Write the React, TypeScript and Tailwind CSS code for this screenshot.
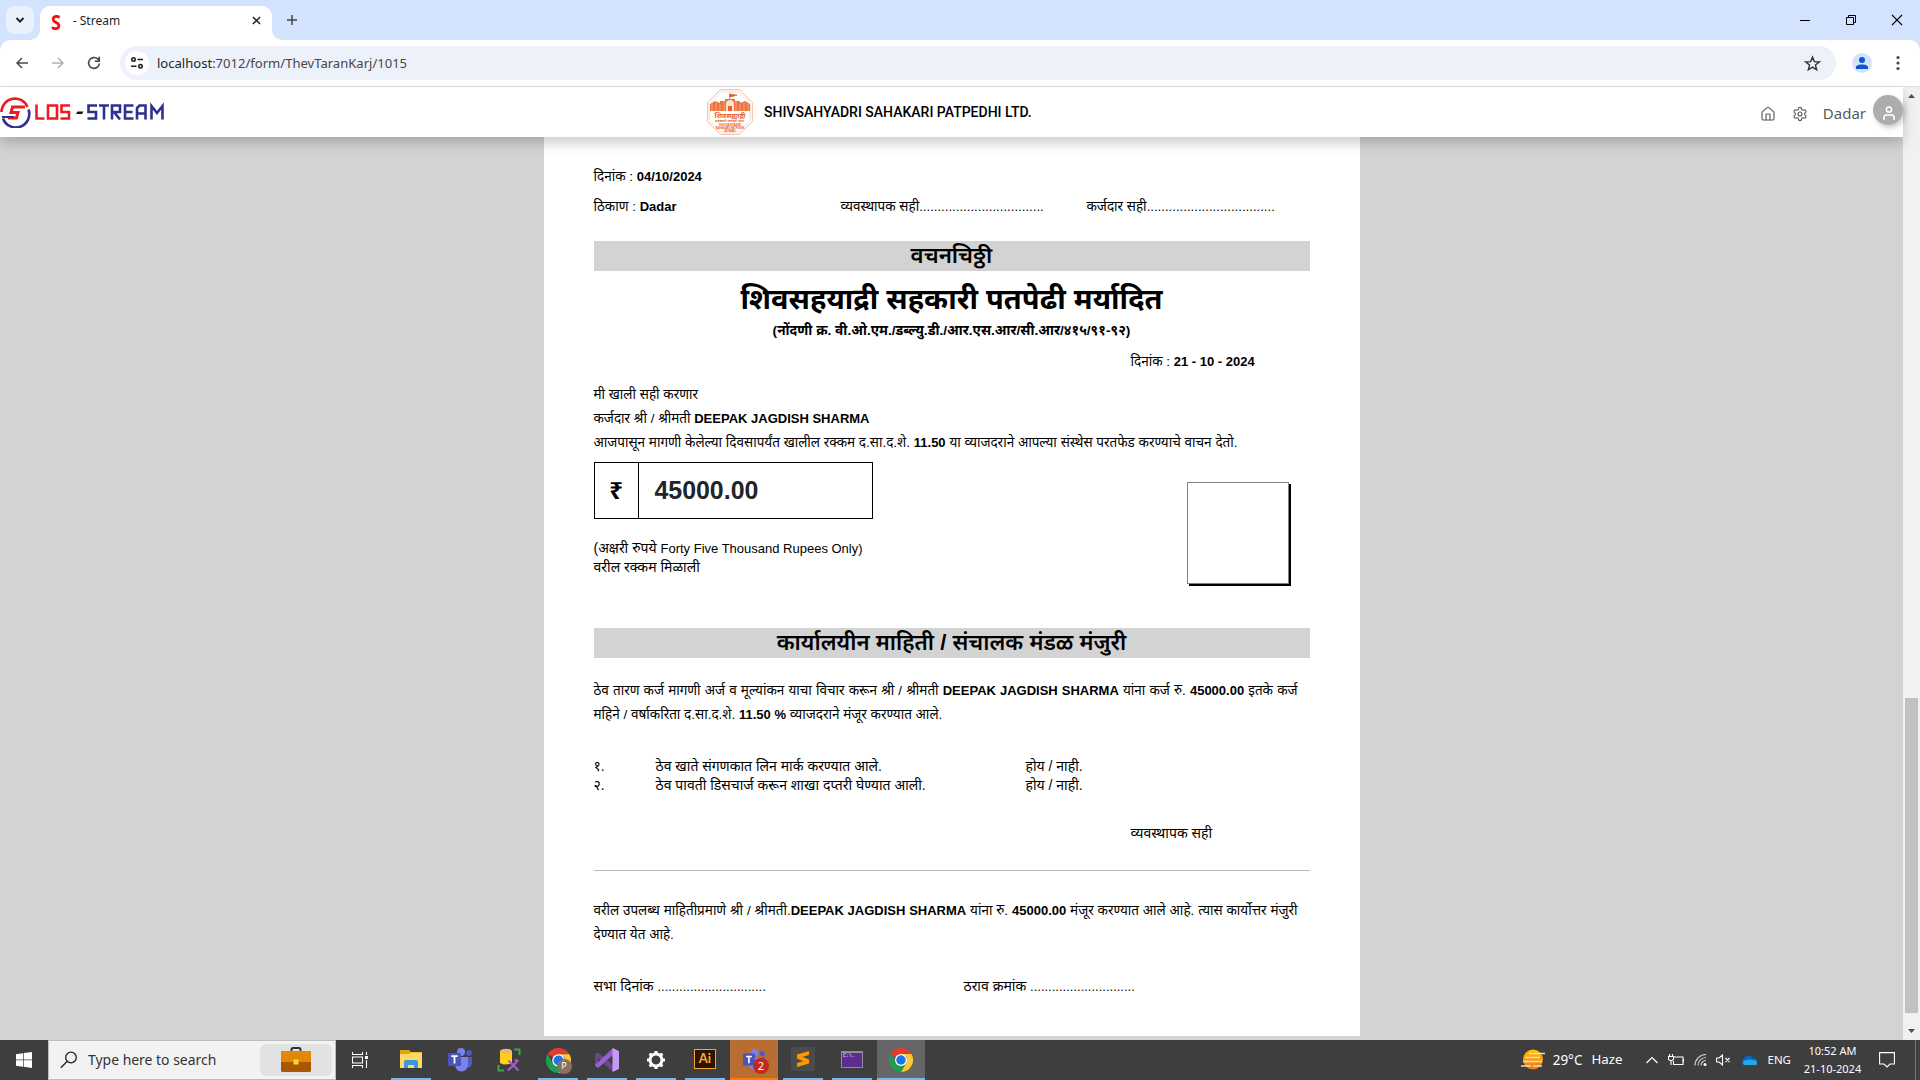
import React from "react";
import { LuHouse, LuSettings } from "react-icons/lu";

const NAME = "DEEPAK JAGDISH SHARMA";

const Row = ({ className = "", children }: { className?: string; children?: React.ReactNode }) => (
  <div className={"flex items-center whitespace-nowrap " + className}>{children}</div>
);

const B = ({ children }: { children: React.ReactNode }) => <b className="text-[13px]">{children}</b>;

function ChromeIcon({ className = "size-[25px]" }: { className?: string }) {
  return (
    <svg viewBox="0 0 48 48" className={className}>
      <path d="M24 24 3.2 12A24 24 0 0 1 44.8 12H24z" fill="#e33b2e" />
      <path d="M44.8 12A24 24 0 0 1 24 48L34.4 30 36 18 24 12z" fill="#fcc934" />
      <path d="M3.2 12A24 24 0 0 0 24 48L34.4 30 24 32 13.6 30z" fill="#1e9e50" />
      <circle cx="24" cy="24" r="12" fill="#fff" />
      <circle cx="24" cy="24" r="9.5" fill="#1a73e8" />
    </svg>
  );
}

function TeamsIcon({ className = "size-[26px]" }: { className?: string }) {
  return (
    <svg viewBox="0 0 26 26" className={className}>
      <circle cx="22" cy="6" r="2.8" fill="#5059c9" />
      <path d="M17 10h8v7a4 4 0 0 1-6 3z" fill="#5059c9" />
      <circle cx="14" cy="5" r="4" fill="#7b83eb" />
      <path d="M8 10h13v8a6.5 6.5 0 0 1-13 0z" fill="#7b83eb" />
      <rect x="1" y="6" width="13" height="13" rx="1" fill="#4b53bc" />
      <path d="M4.3 9.2h6.4M7.5 9.2v7.3" stroke="#fff" strokeWidth="1.8" />
    </svg>
  );
}

function TaskButton({ children, className = "", bar = "bg-[#76b9ed]", wide = false }: { children: React.ReactNode; className?: string; bar?: string; wide?: boolean }) {
  return (
    <div className={"flex h-10 w-12 flex-col items-center " + className}>
      <div className="flex h-[38px] w-12 items-center justify-center pt-[2px]">{children}</div>
      <div className={(wide ? "w-12 " : "w-10 ") + "h-[2px] " + bar} />
    </div>
  );
}

function TabStrip() {
  return (
    <div className="flex h-10 items-start bg-[#d3e3fd]">
      <div className="ml-[6px] mt-[6px] flex size-7 items-center justify-center rounded-[9px] bg-[#e9f1fe]">
        <svg viewBox="0 0 10 10" className="size-[10px]"><path d="M1.5 3 5 6.6 8.5 3" fill="none" stroke="#1f1f1f" strokeWidth="1.9" /></svg>
      </div>
      <svg viewBox="0 0 10 10" className="mt-[30px] ml-[-4px] size-[10px]"><path d="M10 0v10H0A10 10 0 0 0 10 0" fill="#fff" /></svg>
      <div className="mt-[6px] flex h-[34px] w-[232px] items-center rounded-t-[10px] bg-white pb-[5px]">
        <div className="ml-[9px] flex w-[14px] scale-x-[0.82] justify-center font-['Noto_Sans'] text-[22px] leading-none font-bold text-[#fa0a0a]">S</div>
        <span className="ml-[10px] w-[182px] font-['Noto_Sans'] text-[12px] text-[#1f1f1f]">- Stream</span>
        <svg viewBox="0 0 10 10" className="mr-[11px] size-[9px] shrink-0"><path d="M1 1l8 8M9 1 1 9" stroke="#1f1f1f" strokeWidth="1.6" /></svg>
      </div>
      <svg viewBox="0 0 10 10" className="mt-[30px] size-[10px]"><path d="M0 0v10h10A10 10 0 0 1 0 0" fill="#fff" /></svg>
      <svg viewBox="0 0 12 12" className="mt-[14px] ml-[4px] size-3"><path d="M6 1v10M1 6h10" stroke="#474747" strokeWidth="1.5" /></svg>
      <div className="ml-auto flex items-center pt-[14px]">
        <svg viewBox="0 0 10 12" className="h-3 w-[10px]"><path d="M0 6.5h10" stroke="#000" /></svg>
        <svg viewBox="0 0 12 12" className="ml-[35px] size-3"><path d="M1.5 3.5h7v7h-7zM3.5 3.5v-2h7v7h-2" fill="none" stroke="#000" /></svg>
        <svg viewBox="0 0 12 12" className="mr-[17px] ml-[34px] size-3"><path d="M1 1l10 10M11 1 1 11" stroke="#000" strokeWidth="1.1" /></svg>
      </div>
    </div>
  );
}

function AddressBar() {
  return (
    <div className="bg-[#d3e3fd]">
      <div className="flex h-[47px] items-center rounded-t-[10px] border-b border-[#dfe0e2] bg-white">
        <svg viewBox="0 0 12 12" className="ml-4 size-3"><path d="M12 6H1M6 1 1 6l5 5" fill="none" stroke="#474747" strokeWidth="1.5" /></svg>
        <svg viewBox="0 0 12 12" className="ml-6 size-3"><path d="M0 6h11M6 1l5 5-5 5" fill="none" stroke="#b0b0b0" strokeWidth="1.5" /></svg>
        <svg viewBox="0 0 14 14" className="ml-[23px] size-[14px]"><path d="M12.4 7.5a5.4 5.4 0 1 1-1.8-4.6L12 4.3M12.2.8v4.4H7.8" fill="none" stroke="#474747" strokeWidth="1.6" /></svg>
        <div className="ml-[19px] flex h-[34px] w-[1716px] items-center rounded-full bg-[#edf1fa]">
          <div className="ml-[5px] flex size-6 items-center justify-center rounded-full bg-white">
            <svg viewBox="0 0 14 14" className="size-[14px]"><g fill="none" stroke="#1f1f1f" strokeWidth="1.6"><circle cx="3.5" cy="3.5" r="1.7" /><path d="M7.5 3.5H13M1 10.2h5.5" /><circle cx="10.5" cy="10.2" r="1.7" /></g></svg>
          </div>
          <span className="mt-px ml-[8px] font-['Noto_Sans'] text-[13.05px] text-[#474747]"><span className="text-[#1f1f1f]">localhost</span>:7012/form/ThevTaranKarj/1015</span>
          <svg viewBox="0 0 24 24" className="mr-[15px] ml-auto size-[17px]"><path d="m12 3 2.6 6.3 6.9.5-5.3 4.4 1.7 6.6-5.9-3.6-5.9 3.6 1.7-6.6-5.3-4.4 6.9-.5z" fill="none" stroke="#333" strokeWidth="2" /></svg>
        </div>
        <div className="ml-4 flex size-5 items-center justify-center rounded-full bg-[#d3e3fd]">
          <svg viewBox="0 0 12 12" className="size-3"><circle cx="6" cy="3" r="3" fill="#0b57d0" /><path d="M0 12V10C0 6.500 12 6.500 12 10v2z" fill="#0b57d0" /></svg>
        </div>
        <svg viewBox="0 0 4 16" className="ml-6 h-4 w-1"><g fill="#474747"><circle cx="2" cy="2.500" r="1.6" /><circle cx="2" cy="8" r="1.6" /><circle cx="2" cy="13.500" r="1.6" /></g></svg>
      </div>
    </div>
  );
}

function LosLogo() {
  return (
    <svg viewBox="0 0 166 32" className="h-8 w-[166px]">
      <g fill="none" strokeWidth="2.600">
        <path d="M1.5 16A13.500 13.500 0 0 1 27.500 11" stroke="#ed1c24" />
        <path d="M28.500 13.500A13.500 13.500 0 0 1 3 22.500" stroke="#2e3192" />
        <path d="M25 11H12.500l-1.500 5.500h7L16.500 22H8" stroke="#ed1c24" strokeWidth="3" />
        <path d="M2 21h12" stroke="#2e3192" strokeWidth="2" />
      </g>
      <g fill="none" stroke="#ed1c24" strokeWidth="2.600">
        <path d="M36.500 8.500v14h8M48 9.500h9v13h-9zM70 9.500h-8.500V16H69v6.500h-8.500" />
      </g>
      <path d="M77.500 15.500h6l-1.500 2.500h-6z" fill="#111" />
      <g fill="none" stroke="#2e3192" strokeWidth="2.600">
        <path d="M97 9.500h-8.500V16H96v6.500h-8.500M99 9.500h10M104 9.500v14M112 23.500v-14h8V16h-6l6 7.500M133.500 9.500H125v13h8.500M125 16h7.500M137 23.500V12l2.500-2.500h6v14M137 17.500h8.500M151.500 23.500V10l5.500 7 5.500-7v13.500" />
      </g>
    </svg>
  );
}

function Emblem() {
  return (
    <svg viewBox="0 0 46 46" className="size-[46px]">
      <path d="M13.500.7h19L45.300 13.500v19L32.500 45.300h-19L.7 32.500v-19z" fill="#fff" stroke="#f3b99d" />
      <path d="M14.500 2.900h17L43.100 14.500v17L31.500 43.100h-17L2.900 31.500v-17z" fill="none" stroke="#f6cdb9" strokeWidth=".7" />
      <path d="M22.500 4.500V11M23 5l7 1.200L23 8z" fill="#e8622c" stroke="#e8622c" strokeWidth=".8" />
      <path d="M3 22v-7l5-3 5 2v-2h5v-2h10v2h5v2l5-2 5 3v7z" fill="#ec7442" />
      <path d="M19 22v-7a4 4 0 0 1 8 0v7z" fill="#fbe1d4" /><path d="M21 22v-5h4v5z" fill="#e8622c" />
      <path d="M5 14v8M9 13v9M13 15v7M17 12v10M29 12v10M33 15v7M37 13v9M41 14v8" stroke="#f7b795" strokeWidth=".8" />
      <g fontFamily="Noto Sans" fill="#e8622c" textAnchor="middle" fontWeight="700">
        <text x="23" y="28.500" fontSize="7">शिवसह्याद्री</text>
        <text x="23" y="33" fontSize="3.600">सहकारी पतपेढी मर्या.</text>
        <text x="23" y="36.800" fontSize="3">SHIVSAHYADRI</text>
        <text x="23" y="39.800" fontSize="2.800">SAHAKARI PATPEDHI</text>
        <text x="23" y="42.600" fontSize="2.600">MUMBAI</text>
      </g>
    </svg>
  );
}

function AppHeader() {
  return (
    <header className="relative z-10 flex h-[50px] w-[1903px] items-center bg-white shadow-[0_6px_12px_rgba(0,0,0,0.2)]">
      <div className="flex w-[707px] items-center"><LosLogo /></div>
      <Emblem />
      <span className="ml-[11px] font-['Roboto'] text-[14px] font-medium text-black">SHIVSAHYADRI SAHAKARI PATPEDHI LTD.</span>
      <div className="ml-auto flex items-center text-[#5b5b5b]">
        <LuHouse className="mt-[4px] size-4" strokeWidth={1.7} />
        <LuSettings className="mt-[4px] ml-4 size-4" strokeWidth={1.7} />
        <span className="mt-[2px] ml-[15px] font-['Noto_Sans'] text-[15px]">Dadar</span>
        <div className="mb-[5px] ml-[7px] flex size-[30px] items-center justify-center rounded-full bg-[#adadad] shadow-[2px_3px_5px_rgba(0,0,0,0.2)]">
          <svg viewBox="0 0 12 14" className="mt-[6px] ml-[2px] h-[14px] w-3"><g fill="none" stroke="#fff" strokeWidth="1.500"><circle cx="6" cy="3.500" r="2.600" /><path d="M1 14v-2.500Q1 9 3.500 9h5Q11 9 11 11.500V14" /></g></svg>
        </div>
      </div>
    </header>
  );
}

function Document() {
  return (
    <div className="mx-auto h-[899px] w-[816px] bg-white px-[50px] pt-[27px] font-['Liberation_Sans','Noto_Sans',sans-serif] text-[13.500px] text-black">
      <Row className="mt-px h-[24px]"><span>दिनांक : <B>04/10/2024</B></span></Row>
      <Row className="mt-[6px] h-[24px]">
        <span className="w-[247px]">ठिकाण : <B>Dadar</B></span>
        <span className="w-[246px]">व्यवस्थापक सही<span className="text-[13.200px]">..................................</span></span>
        <span>कर्जदार सही<span className="text-[13.200px]">...................................</span></span>
      </Row>
      <Row className="mt-[22px] h-[30px] justify-center bg-[#d3d3d3] text-[22.300px] font-semibold">वचनचिठ्ठी</Row>
      <Row className="mt-[9px] h-[40px] justify-center text-[29px] font-bold">शिवसहयाद्री सहकारी पतपेढी मर्यादित</Row>
      <Row className="mt-[-1px] h-[24px] justify-center text-[13.700px] font-bold">(नोंदणी क्र. वी.ओ.एम./डब्ल्यु.डी./आर.एस.आर/सी.आर/४१५/९१-९२)</Row>
      <Row className="mt-[7px] h-[24px] pl-[537px]"><span>दिनांक : <B>21 - 10 - 2024</B></span></Row>
      <Row className="mt-[9px] h-[24px]">मी खाली सही करणार</Row>
      <Row className="h-[24px]"><span>कर्जदार श्री / श्रीमती <B>{NAME}</B></span></Row>
      <Row className="h-[25px]"><span className="w-[644px] [text-align-last:justify]">आजपासून मागणी केलेल्या दिवसापर्यंत खालील रक्कम द.सा.द.शे. <B>11.50</B> या व्याजदराने आपल्या संस्थेस परतफेड करण्याचे वाचन देतो.</span></Row>
      <div className="mt-[6px] flex h-[166px] items-start">
        <div>
          <div className="flex h-[57px] w-[279px] border border-black font-bold">
            <div className="flex w-[44px] items-center justify-center border-r border-black text-[24px]">₹</div>
            <div className="flex items-center pl-4 text-[24.900px] text-[#212529]">45000.00</div>
          </div>
          <Row className="mt-[20px] h-[19px] text-[14px]"><span>(अक्षरी रुपये <span className="text-[13px]">Forty Five Thousand Rupees Only)</span></span></Row>
          <Row className="h-[19px] text-[14px]">वरील रक्कम मिळाली</Row>
        </div>
        <div className="mt-5 ml-[314px] h-[102px] w-[102px] border border-[#808080] bg-white shadow-[2px_2px_0_#000]" />
      </div>
      <Row className="h-[30px] justify-center bg-[#d3d3d3] text-[22.200px] font-semibold">कार्यालयीन माहिती / संचालक मंडळ मंजुरी</Row>
      <Row className="mt-[21px] h-[24px]"><span className="w-[704px] [text-align-last:justify]">ठेव तारण कर्ज मागणी अर्ज व मूल्यांकन याचा विचार करून श्री / श्रीमती <B>{NAME}</B> यांना कर्ज रु. <B>45000.00</B> इतके कर्ज</span></Row>
      <Row className="h-[24px]"><span>महिने / वर्षाकरिता द.सा.द.शे. <B>11.50 %</B> व्याजदराने मंजूर करण्यात आले.</span></Row>
      <Row className="mt-[30px] h-[19px] text-[14px]"><span className="w-[62px]">१.</span><span className="w-[370px]">ठेव खाते संगणकात लिन मार्क करण्यात आले.</span><span>होय / नाही.</span></Row>
      <Row className="h-[19px] text-[14px]"><span className="w-[62px]">२.</span><span className="w-[370px]">ठेव पावती डिसचार्ज करून शाखा दप्तरी घेण्यात आली.</span><span>होय / नाही.</span></Row>
      <Row className="mt-[28px] h-[20px] pl-[537px] text-[14px]">व्यवस्थापक सही</Row>
      <div className="mt-[27px] h-px bg-[#bdbdbd]" />
      <Row className="mt-[28px] h-[24px]"><span className="w-[704px] [text-align-last:justify]">वरील उपलब्ध माहितीप्रमाणे श्री / श्रीमती.<B>{NAME}</B> यांना रु. <B>45000.00</B> मंजूर करण्यात आले आहे. त्यास कार्योत्तर मंजुरी</span></Row>
      <Row className="h-[24px]">देण्यात येत आहे.</Row>
      <Row className="mt-[27px] h-[24px] text-[14px]"><span className="w-[370px]">सभा दिनांक <span className="text-[13px]">..............................</span></span><span>ठराव क्रमांक <span className="text-[13px]">.............................</span></span></Row>
    </div>
  );
}

function Taskbar() {
  return (
    <div className="flex h-10 items-center bg-[#3e3e3e] font-['Noto_Sans'] text-white">
      <div className="flex w-12 justify-center">
        <svg viewBox="0 0 16 16" className="size-4"><path d="M0 2.300 7 1.200v6.300H0zM7.700 1.100 16 0v7.500H7.700zM0 8.200h7v6.500L0 13.700zM7.700 8.200H16V16l-8.300-1.200z" fill="#fff" /></svg>
      </div>
      <div className="flex h-10 w-[288px] items-center border border-[#bcbcbc] bg-[#f2f2f2] text-[#333]">
        <svg viewBox="0 0 18 18" className="ml-[11px] size-[18px]"><circle cx="11" cy="6.500" r="5.300" fill="none" stroke="#222" strokeWidth="1.300" /><path d="M7 10.500.8 16.800" stroke="#222" strokeWidth="1.300" /></svg>
        <span className="ml-[10px] text-[13.950px]">Type here to search</span>
        <div className="mr-[3px] ml-auto flex h-8 w-[72px] items-center justify-center rounded-md bg-[#e2e2e2]">
          <svg viewBox="0 0 30 26" className="h-[26px] w-[30px]"><path d="M10.500 4.500V2.500Q10.500 1 12 1h6q1.500 0 1.500 1.500v2" fill="none" stroke="#333" strokeWidth="2" /><rect y="4" width="30" height="21" rx="1.500" fill="#a85802" /><path d="M0 5.500Q0 4 1.500 4h27Q30 4 30 5.500V15H0z" fill="#e18807" /><rect x="12.500" y="12.500" width="5" height="5" fill="#fdd835" /></svg>
        </div>
      </div>
      <div className="flex w-12 justify-center">
        <svg viewBox="0 0 16 16" className="size-4"><g fill="none" stroke="#fff" strokeWidth="1.100"><path d="M.5 0v2.500h10V0M.5 5h10v6H.5zM.5 16v-2.500h10V16M14.500 0v3M14.500 8v8" /></g><path d="M13 4h3v3h-3z" fill="#fff" /></svg>
      </div>
      <div className="flex gap-x-[1px]">
        <TaskButton className="ml-[3px]">
          <svg viewBox="0 0 22 20" className="h-5 w-[22px]"><path d="M0 1q0-1 1-1h8l2 2h10q1 0 1 1v14H0z" fill="#e5a50a" /><path d="M0 4h9l2-1.500h11V18H0z" fill="#ffd966" /><path d="M4 18v-6q0-2 2-2h10q2 0 2 2v6h-4v-3H8v3z" fill="#3a96dd" /></svg>
        </TaskButton>
        <TaskButton bar="bg-transparent"><TeamsIcon /></TaskButton>
        <TaskButton bar="bg-transparent">
          <svg viewBox="0 0 24 24" className="size-6"><path d="M3 3v12q5 3 12 0V3z" fill="#ffcf1a" /><ellipse cx="9" cy="3.200" rx="6" ry="2.500" fill="#f6b26b" /><path d="M17 1.500h5.500V7M1.500 17v5.500H7" fill="none" stroke="#39a845" strokeWidth="2" /><path d="m11.500 12.500 10 10M21 12.500l-10 10M17.500 12l4 1" stroke="#a45ad0" strokeWidth="2.200" /></svg>
        </TaskButton>
        <TaskButton>
          <span className="relative"><ChromeIcon /><span className="absolute top-[11px] left-[11px] flex size-[15px] items-center justify-center rounded-full bg-[#8d6e63] text-[9px]">P</span></span>
        </TaskButton>
        <TaskButton>
          <svg viewBox="0 0 24 24" className="size-6"><path d="M0 6 3 4.500 18 17v7L3 10v9l-3-2z" fill="#68478f" /><path d="m0 18 3 2L18 7V0L0 17z" fill="#9561d1" /><path d="m17.500 0 6.500 3v18l-6.500 3z" fill="#c79bf5" /></svg>
        </TaskButton>
        <TaskButton>
          <svg viewBox="0 0 20 20" className="size-[20px]"><circle cx="10" cy="10" r="6" fill="none" stroke="#fff" strokeWidth="3" /><path d="M10 1v3M10 16v3M1 10h3M16 10h3M3.600 3.600l2.100 2.100M14.300 14.300l2.100 2.100M3.600 16.400l2.100-2.100M14.300 5.700l2.100-2.100" stroke="#fff" strokeWidth="3" /></svg>
        </TaskButton>
        <TaskButton><div className="mb-[3px] flex h-5 w-[22px] items-center justify-center border border-[#f7a139] bg-[#2a1600] font-['Lato'] text-[13px] font-bold text-[#ffa937]">Ai</div></TaskButton>
        <TaskButton className="bg-[#b86d33]" bar="bg-[#ff7a0a]" wide>
          <span className="relative"><TeamsIcon className="size-6" /><span className="absolute top-[10px] left-[11px] flex size-4 items-center justify-center rounded-full bg-[#c4291c] text-[11px]">2</span></span>
        </TaskButton>
        <TaskButton>
          <div className="mb-[2px] flex size-6 items-center justify-center rounded-[2px] bg-[#4b4b4b]"><svg viewBox="0 0 14 18" className="h-[18px] w-[14px]"><path d="M1 4.500 13 1v4L1 8.500zM1 4.500l12 5v4l-12-5zM1 13l12-3.500v4L1 17z" fill="#ff9800" /></svg></div>
        </TaskButton>
        <TaskButton><div className="mb-[2px] h-[17px] w-[22px] border border-t-2 border-[#8d8d9b] bg-[#5c2d91] pl-px font-['Liberation_Mono'] text-[5px] leading-[7px]">C:\.</div></TaskButton>
        <TaskButton className="bg-[#666]" wide><ChromeIcon className="size-6" /></TaskButton>
      </div>
      <div className="ml-auto flex h-10 items-center">
        <svg viewBox="0 0 24 22" className="h-[22px] w-6"><defs><linearGradient id="sun" x2="0" y2="1"><stop stopColor="#fdc400" /><stop offset="1" stopColor="#f1711c" /></linearGradient></defs><circle cx="12" cy="10.500" r="10" fill="url(#sun)" /><path d="M8 4.500h16M4 8.500h15M2 12.500h19M0 17h10M12 17h9" stroke="#f5ddb0" strokeWidth="1.700" /></svg>
        <span className="ml-[8px] text-[13.500px]">29°C</span><span className="ml-[9px] text-[13.300px]">Haze</span>
        <svg viewBox="0 0 12 8" className="ml-6 h-2 w-3"><path d="m.5 7 5.500-5.500L11.500 7" fill="none" stroke="#fff" strokeWidth="1.200" /></svg>
        <svg viewBox="0 0 16 12" className="ml-[10px] h-3 w-4"><path d="M6 3h9v7.500H5.500V7M15.500 5v3M1.500 0v3M4.500 0v3M.5 2.500h5v3L3 7 .5 5.500zM3 7v4" fill="none" stroke="#fff" strokeWidth="1.100" /></svg>
        <svg viewBox="0 0 13 12" className="ml-[10px] h-3 w-[13px]"><path d="M1 11.500A11 11 0 0 1 12 .5M4 11.500a8 8 0 0 1 8-8M7 11.500a5 5 0 0 1 5-5" fill="none" stroke="#c9c9c9" strokeWidth="1.200" /><circle cx="11" cy="10.500" r="1.500" fill="#fff" /></svg>
        <svg viewBox="0 0 15 12" className="ml-[9px] h-3 w-[15px]"><path d="M.6 4v4h2.500L6.500 11V1L3.100 4zM9.500 4l4 4M13.500 4l-4 4" fill="none" stroke="#fff" strokeWidth="1.100" /></svg>
        <svg viewBox="0 0 16 10" className="ml-[10px] h-[10px] w-4"><path d="M3.500 10A3.500 3.500 0 0 1 3 3.500a5 5 0 0 1 9-.5A3.500 3.500 0 0 1 13 10z" fill="#0a66c2" /><path d="M3 10q-2-2 0-4l4-1.500L12 5q4 0 4 3t-3 2z" fill="#28a8ea" /></svg>
        <span className="ml-[10px] text-[11.500px]">ENG</span>
        <div className="ml-[12px] flex w-[59px] flex-col items-center text-[11px] leading-[18px] whitespace-nowrap"><span>10:52 AM</span><span>21-10-2024</span></div>
        <svg viewBox="0 0 16 16" className="ml-[17px] size-4"><path d="M.6.600h14.800v11.400H11L8 15l-3-3H.6z" fill="none" stroke="#fff" strokeWidth="1.100" /></svg>
        <div className="ml-[20px] h-10 w-px bg-[#777]" /><div className="w-1" />
      </div>
    </div>
  );
}

export default function App() {
  return (
    <div className="flex h-[1080px] w-[1920px] flex-col overflow-hidden">
      <TabStrip />
      <AddressBar />
      <div className="flex h-[953px]">
        <div className="w-[1903px] bg-[#d3d3d3]"><AppHeader /><Document /></div>
        <div className="flex w-[17px] flex-col items-center bg-[#f1f1f1]">
          <svg viewBox="0 0 7 4" className="mt-[7px] h-1 w-[7px]"><path d="M0 4 3.500 0 7 4z" fill="#505050" /></svg>
          <div className="mt-[600px] h-[315px] w-[13px] bg-[#c1c1c1]" />
          <svg viewBox="0 0 7 4" className="mt-4 h-1 w-[7px]"><path d="M0 0h7L3.500 4z" fill="#505050" /></svg>
        </div>
      </div>
      <Taskbar />
    </div>
  );
}
